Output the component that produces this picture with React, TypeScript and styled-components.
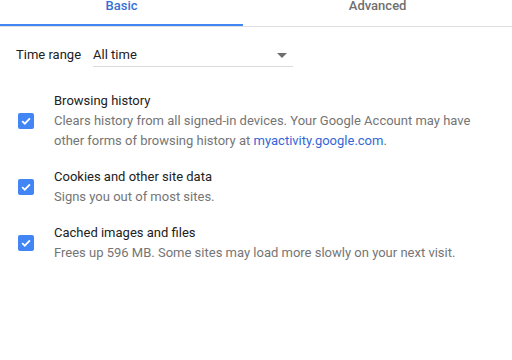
import React from "react";
import styled, { createGlobalStyle } from "styled-components";

const Global = createGlobalStyle`
  html, body { margin: 0; padding: 0; background: #fff; }
  body { font-family: Roboto, "Liberation Sans", Arial, sans-serif; font-size: 13px; overflow: hidden; }
`;

const Page = styled.div`
  width: 512px;
  height: 360px;
  overflow: hidden;
  background: #fff;
`;

const TabBar = styled.div`
  display: flex;
  margin-top: -13px;
  border-bottom: 1px solid #e0e0e0;
`;

const Tab = styled.div<{ $active?: boolean }>`
  flex: 1 1 auto;
  height: 39px;
  line-height: 37px;
  text-align: center;
  font-weight: 500;
  font-size: 13px;
  color: ${(p) => (p.$active ? "#3b6fd8" : "#6f6f6f")};
  box-sizing: border-box;
  border-bottom: 2px solid ${(p) => (p.$active ? "#4285f4" : "transparent")};
`;

const RangeRow = styled.div`
  display: flex;
  align-items: flex-start;
  gap: 12px;
  padding: 18px 0 0 16px;
`;

const Label = styled.span`
  color: #212121;
  line-height: 20px;
`;

const Select = styled.div`
  position: relative;
  width: 200px;
  line-height: 20px;
  padding-bottom: 1px;
  border-bottom: 1px solid #dadada;
  color: #212121;
`;

const Arrow = styled.span`
  position: absolute;
  right: 6px;
  top: 8px;
  width: 0;
  height: 0;
  border-left: 5px solid transparent;
  border-right: 5px solid transparent;
  border-top: 5px solid #6e6e6e;
`;

const List = styled.div`
  display: flex;
  flex-direction: column;
  margin-top: 16px;
`;

const Item = styled.div`
  display: flex;
  align-items: center;
  gap: 20px;
  padding: 8px 20px 8px 18px;
`;

const Box = styled.div`
  flex: none;
  width: 16px;
  height: 16px;
  border-radius: 2px;
  background: #4285f4;
  display: flex;
  align-items: center;
  justify-content: center;
`;

const Texts = styled.div`
  display: flex;
  flex-direction: column;
  line-height: 20px;
`;

const Title = styled.div`
  color: #212121;
`;

const Desc = styled.div`
  color: #757575;
`;

const Link = styled.a`
  color: #3367d6;
  text-decoration: none;
`;

const Check = () => (
  <svg width="12" height="12" viewBox="0 0 12 12">
    <path d="M2.2 6.2 L4.8 8.7 L9.9 3.4" fill="none" stroke="#fff" strokeWidth="1.8" />
  </svg>
);

const items = [
  {
    title: "Browsing history",
    desc: (
      <>
        Clears history from all signed-in devices. Your Google Account may have other forms of
        browsing history at <Link>myactivity.google.com</Link>.
      </>
    ),
  },
  { title: "Cookies and other site data", desc: <>Signs you out of most sites.</> },
  {
    title: "Cached images and files",
    desc: <>Frees up 596 MB. Some sites may load more slowly on your next visit.</>,
  },
];

export default function App() {
  return (
    <Page>
      <Global />
      <TabBar>
        <Tab $active>Basic</Tab>
        <Tab>Advanced</Tab>
      </TabBar>
      <RangeRow>
        <Label>Time range</Label>
        <Select>
          All time
          <Arrow />
        </Select>
      </RangeRow>
      <List>
        {items.map((it) => (
          <Item key={it.title}>
            <Box>
              <Check />
            </Box>
            <Texts>
              <Title>{it.title}</Title>
              <Desc>{it.desc}</Desc>
            </Texts>
          </Item>
        ))}
      </List>
    </Page>
  );
}
